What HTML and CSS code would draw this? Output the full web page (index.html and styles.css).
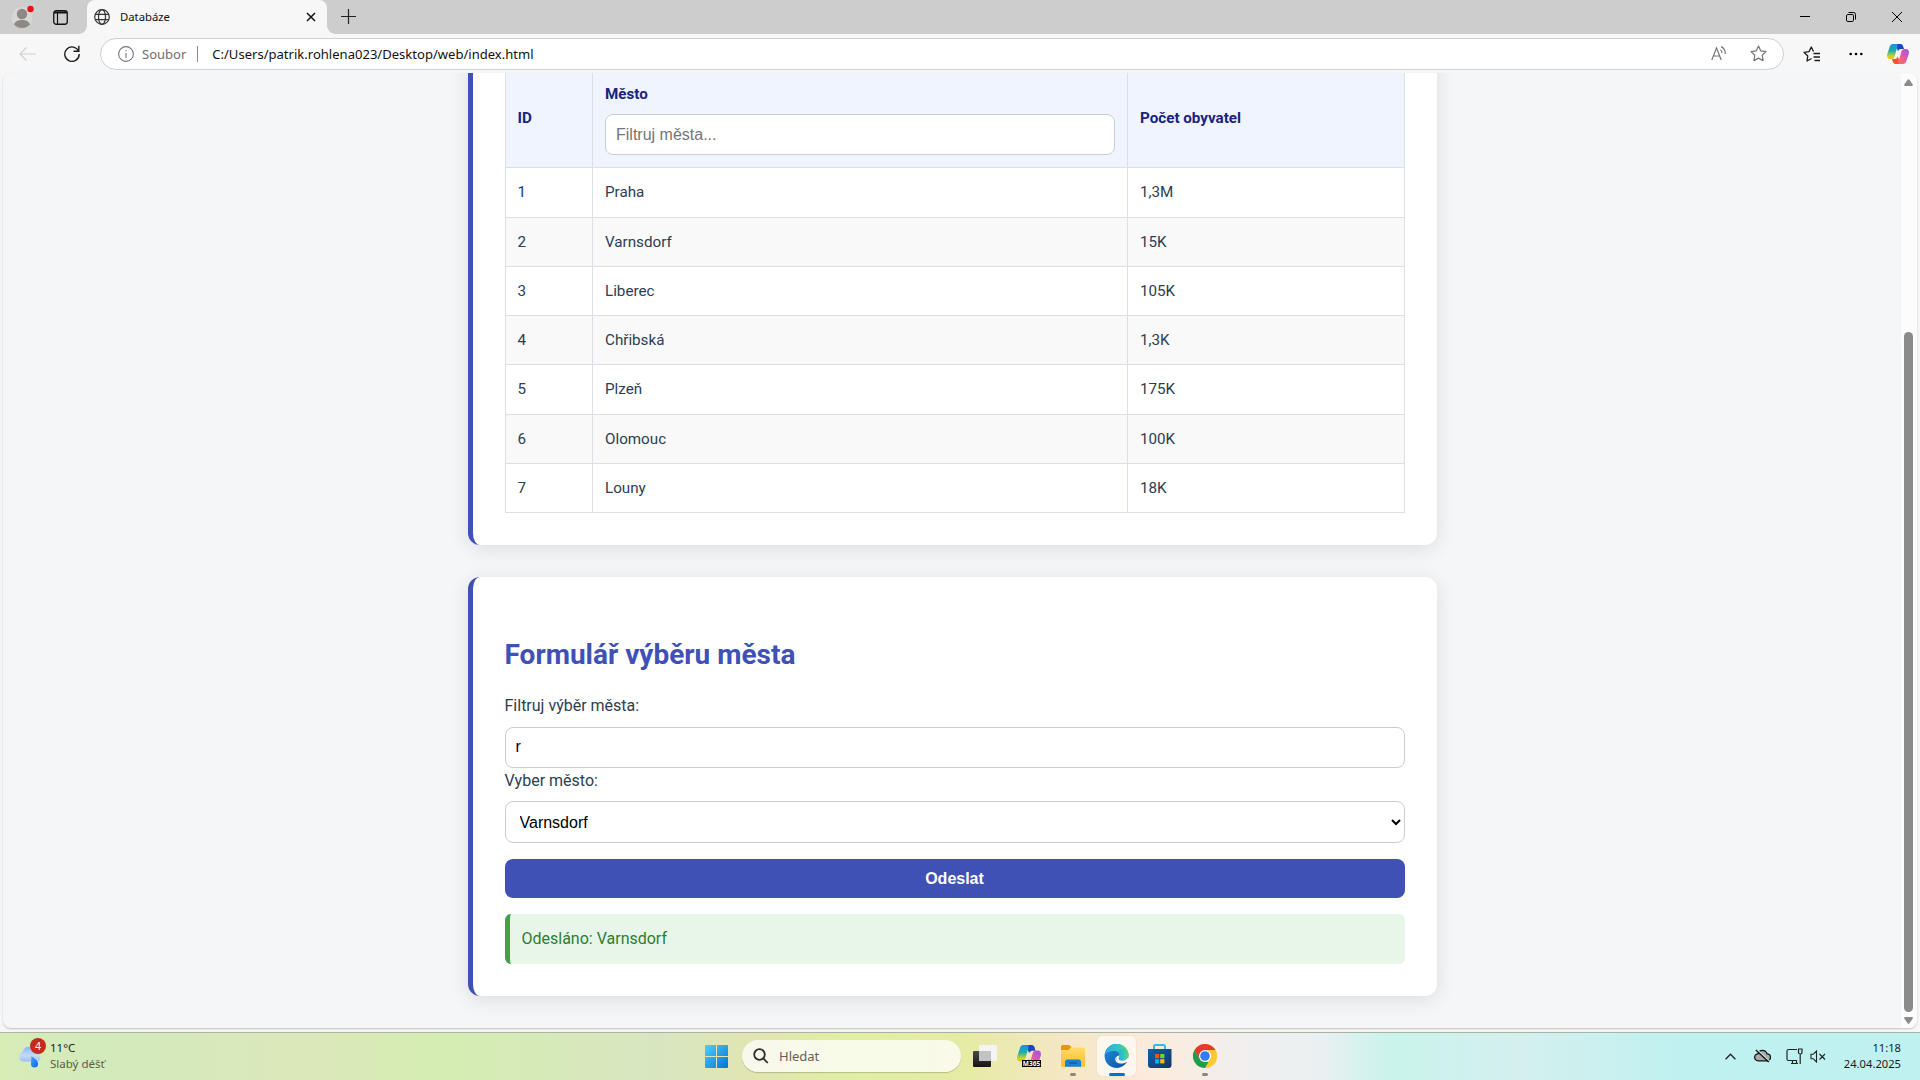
FILE: index.html
```html
<!DOCTYPE html>
<html lang="cs">
<head>
<meta charset="utf-8">
<title>Databáze</title>
<link rel="stylesheet" href="styles.css">
</head>
<body>
<svg class="defs" width="0" height="0" aria-hidden="true">
  <defs>
    <linearGradient id="winblue" x1="0" y1="0" x2="1" y2="1"><stop offset="0" stop-color="#4fd0fb"/><stop offset="1" stop-color="#0670cf"/></linearGradient>
    <linearGradient id="cpA" x1="0" y1="0" x2="0" y2="1"><stop offset="0" stop-color="#1295e8"/><stop offset=".45" stop-color="#1fb0a8"/><stop offset=".8" stop-color="#c6d22e"/><stop offset="1" stop-color="#f5c400"/></linearGradient>
    <linearGradient id="cpB" x1="1" y1="0" x2="0" y2="1"><stop offset="0" stop-color="#9a50f0"/><stop offset=".5" stop-color="#e859a4"/><stop offset="1" stop-color="#ff7a2f"/></linearGradient>
    <linearGradient id="folder" x1="0" y1="0" x2="0" y2="1"><stop offset="0" stop-color="#ffdb6b"/><stop offset="1" stop-color="#f9bd2a"/></linearGradient>
    <linearGradient id="edgeA" x1="0" y1="0" x2="1" y2="0"><stop offset="0" stop-color="#2aa7e4"/><stop offset=".55" stop-color="#2fc7c4"/><stop offset="1" stop-color="#62d957"/></linearGradient>
    <linearGradient id="edgeB" x1="0" y1="0" x2="1" y2="1"><stop offset="0" stop-color="#1f8fe0"/><stop offset="1" stop-color="#0c4f9c"/></linearGradient>
    <linearGradient id="store" x1="0" y1="0" x2="1" y2="1"><stop offset="0" stop-color="#0c62ae"/><stop offset="1" stop-color="#153464"/></linearGradient>
    <linearGradient id="cloud" x1="0" y1="0" x2="0" y2="1"><stop offset="0" stop-color="#8db8f2"/><stop offset=".6" stop-color="#c4dafb"/><stop offset="1" stop-color="#9dbdf3"/></linearGradient>
    <linearGradient id="drop" x1="0" y1="0" x2="1" y2="1"><stop offset="0" stop-color="#43a4ff"/><stop offset="1" stop-color="#0a63ea"/></linearGradient>
    <linearGradient id="dark" x1="0" y1="0" x2="0" y2="1"><stop offset="0" stop-color="#484848"/><stop offset="1" stop-color="#151515"/></linearGradient>
    <symbol id="copilot" viewBox="0 0 22 20">
      <path fill="url(#cpA)" d="M6 0h7.200c-2 .5-2.700 2-3.200 4L7.600 12.500c-.6 1.800-1.300 2.600-3.200 2.600H3c-2.500 0-3.500-2.500-2.700-5L2.600 3C3.200 1 4.200 0 6 0z"/>
      <path fill="#1a45c4" d="M10.500 0h3c1.400 0 2.200.9 2.700 2.500l.8 2.600h-3c-1.500 0-2.300.8-2.900 2.400L10 4.500z"/>
      <path fill="url(#cpB)" d="M16 20H8.800c2-.5 2.700-2 3.200-4l2.400-8.500c.6-1.800 1.300-2.600 3.200-2.600H19c2.500 0 3.500 2.500 2.700 5L19.400 17c-.6 2-1.600 3-3.400 3z"/>
      <path fill="#f3502f" d="M11.500 20h-3c-1.400 0-2.200-.9-2.700-2.500L5 14.900h3c1.500 0 2.300-.8 2.900-2.400l1.100 3z"/>
    </symbol>
  </defs>
</svg>

<div class="tabstrip">
  <svg class="avatar" width="26" height="26" viewBox="0 0 26 26"><circle cx="12" cy="13.500" r="10.500" fill="#d9d7d4"/><circle cx="12" cy="10" r="5.200" fill="#8d8985"/><path fill="#8d8985" d="M4 20.500C5.500 16.800 8.500 16 12 16s6.500.8 8 4.500C18 23 15 24 12 24s-6-1-8-3.500z"/><circle cx="20.500" cy="5" r="3.200" fill="#e81113"/></svg>
  <svg class="workspaces" width="15" height="15" viewBox="0 0 15 15"><rect x=".75" y=".75" width="13.500" height="13.500" rx="2.500" fill="none" stroke="#111" stroke-width="1.300"/><path d="M1 2.500h13" stroke="#111" stroke-width="2"/><path d="M4.500 3v11" stroke="#111" stroke-width="1.200"/></svg>
  <div class="tab">
    <svg width="16" height="16" viewBox="0 0 16 16" fill="none" stroke="#333" stroke-width="1.200"><circle cx="8" cy="8" r="7.300"/><ellipse cx="8" cy="8" rx="3.500" ry="7.300"/><path d="M1.300 5.300h13.400M1.300 10.700h13.400"/></svg>
    <span class="tab-title">Databáze</span>
    <svg width="10" height="10" viewBox="0 0 10 10" stroke="#111" stroke-width="1.500"><path d="M1 1l8 8M9 1l-8 8"/></svg>
  </div>
  <svg class="newtab" width="15" height="15" viewBox="0 0 15 15" stroke="#222" stroke-width="1.200"><path d="M7.500 0v15M0 7.500h15"/></svg>
  <div class="window-buttons">
    <svg width="10" height="10" viewBox="0 0 10 10" stroke="#000"><path d="M0 4.500h10"/></svg>
    <svg width="10" height="10" viewBox="0 0 10 10" fill="none" stroke="#000"><rect x=".5" y="2.500" width="7" height="7" rx="1.300"/><path d="M2.500.5H7.500a2 2 0 0 1 2 2v5"/></svg>
    <svg width="10" height="10" viewBox="0 0 10 10" stroke="#000"><path d="M0 0l10 10M10 0L0 10"/></svg>
  </div>
</div>

<div class="toolbar">
  <svg class="back" width="17" height="14" viewBox="0 0 17 14" fill="none" stroke="#cfcfcf" stroke-width="1.200"><path d="M17 7H1M7.500.5L1 7l6.500 6.500"/></svg>
  <svg class="reload" width="16" height="17" viewBox="0 0 16 17" fill="none" stroke="#1b1b1b" stroke-width="1.400"><path d="M14.700 6.500A7.200 7.200 0 1 0 15.200 9"/><path d="M14.800 .8v5.400H9.500"/></svg>
  <div class="address">
    <svg width="16" height="16" viewBox="0 0 16 16" fill="none" stroke="#777" stroke-width="1.100"><circle cx="8" cy="8" r="7.400"/><path d="M8 7v5M8 4v1.300"/></svg>
    <span class="scheme">Soubor</span>
    <span class="divider"></span>
    <span class="url">C:/Users/patrik.rohlena023/Desktop/web/index.html</span>
    <svg class="read" width="17" height="15" viewBox="0 0 17 15" fill="none" stroke="#777" stroke-width="1.200"><path d="M.8 14L5.500 2l4.700 12M2.400 10h6.200M9.500 3.600c1 .8 1.500 2 1.500 3.400M10 .6c2.800 1.300 4.500 4 4.300 7.400"/></svg>
    <svg class="star" width="17" height="17" viewBox="0 0 17 17" fill="none" stroke="#777" stroke-width="1.200" stroke-linejoin="round"><path d="M8.500 1l2.300 4.900 5.200.7-3.800 3.700.9 5.300-4.600-2.500-4.600 2.500.9-5.300L1 6.600l5.200-.7z"/></svg>
  </div>
  <svg class="favorites" width="17" height="16" viewBox="0 0 17 16" fill="none" stroke="#1b1b1b" stroke-width="1.300" stroke-linejoin="round"><path d="M8.500 12.500L4 15l.8-5L1 6.300l5-.7L8.300 1l2.200 4.500"/><path d="M10.500 7.500H17M10.500 11H17M11.500 14.500H17"/></svg>
  <svg class="more" width="14" height="4" viewBox="0 0 14 4"><circle cx="1.700" cy="2" r="1.300"/><circle cx="7" cy="2" r="1.300"/><circle cx="12.300" cy="2" r="1.300"/></svg>
  <svg class="copilot" width="22" height="20"><use href="#copilot"/></svg>
</div>

<div class="frame">
  <div class="viewport">
    <main class="page">
      <section class="card">
        <table>
          <thead>
            <tr>
              <th class="col-id">ID</th>
              <th class="col-city">Město<input type="text" placeholder="Filtruj města..."></th>
              <th>Počet obyvatel</th>
            </tr>
          </thead>
          <tbody>
            <tr><td>1</td><td>Praha</td><td>1,3M</td></tr>
            <tr><td>2</td><td>Varnsdorf</td><td>15K</td></tr>
            <tr><td>3</td><td>Liberec</td><td>105K</td></tr>
            <tr><td>4</td><td>Chřibská</td><td>1,3K</td></tr>
            <tr><td>5</td><td>Plzeň</td><td>175K</td></tr>
            <tr><td>6</td><td>Olomouc</td><td>100K</td></tr>
            <tr><td>7</td><td>Louny</td><td>18K</td></tr>
          </tbody>
        </table>
      </section>
      <section class="card">
        <h2>Formulář výběru města</h2>
        <label for="filter">Filtruj výběr města:</label>
        <input id="filter" type="text" value="r">
        <label for="city">Vyber město:</label>
        <select id="city"><option>Varnsdorf</option></select>
        <button type="button">Odeslat</button>
        <div class="message">Odesláno: Varnsdorf</div>
      </section>
    </main>
    <div class="scrollbar">
      <svg width="9" height="7" viewBox="0 0 9 7"><path fill="#8b8b8b" d="M3.600.7a1 1 0 0 1 1.800 0L8.800 5.600Q9 7 8 7H1Q0 7 .2 5.600z"/></svg>
      <div class="thumb"></div>
      <svg width="9" height="7" viewBox="0 0 9 7"><path fill="#8b8b8b" d="M3.600 6.300a1 1 0 0 0 1.800 0L8.800 1.400Q9 0 8 0H1Q0 0 .2 1.400z"/></svg>
    </div>
  </div>
</div>

<div class="taskbar">
  <div class="weather">
    <div class="weather-icon">
      <svg width="24" height="24" viewBox="0 0 24 24"><path fill="url(#cloud)" d="M5 17.500a5 5 0 0 1-.5-9.500A7 7 0 0 1 18 8a5 5 0 0 1 1.500 9.500z"/><path fill="url(#drop)" d="M13.500 12c3 2.500 6.500 4.500 6.500 8a3.500 3.500 0 0 1-7 0z"/></svg>
      <span class="badge">4</span>
    </div>
    <div class="weather-text"><span>11°C</span><span class="cond">Slabý déšť</span></div>
  </div>
  <div class="apps">
    <svg class="start" width="23" height="23" viewBox="0 0 23 23"><path fill="url(#winblue)" d="M1 0h10v11H0V1q0-1 1-1zM12 0h10q1 0 1 1v10H12zM0 12h11v11H1q-1 0-1-1zM12 12h11v10q0 1-1 1H12z"/></svg>
    <div class="search">
      <svg width="16" height="16" viewBox="0 0 16 16" fill="none" stroke="#2d2f2a" stroke-width="1.800"><circle cx="6.500" cy="6.500" r="5.300"/><path d="M10.300 10.300l4.500 4.700"/></svg>
      <span>Hledat</span>
    </div>
    <svg class="taskview" width="24" height="22" viewBox="0 0 24 22"><rect x="0" y="6" width="18" height="16" rx="1" fill="url(#dark)"/><rect x="6" y="0" width="18" height="16" rx="1" fill="#f4f4f4"/><path fill="#c3c3c3" d="M6 6h12v10H6z"/></svg>
    <div class="m365"><svg width="24" height="22"><use href="#copilot"/></svg><span>M365</span></div>
    <div class="app running"><svg width="24" height="22" viewBox="0 0 24 22"><path fill="#e09b06" d="M0 1.500Q0 0 1.500 0h6.200q.9 0 1.500.7L11 3v4H0z"/><path fill="url(#folder)" d="M0 5h7.500L10 2.500h12.500Q24 2.500 24 4v16.500q0 1.200-1.300 1.200H1.300Q0 21.700 0 20.500z"/><path fill="#1382d6" d="M4 17q0-2.500 2.500-2.500h11Q20 14.500 20 17v4.700H4z"/><path stroke="#0d5ea8" stroke-width="1.500" d="M8 18h8"/></svg></div>
    <div class="app active"><svg width="25" height="24" viewBox="0 0 24 24"><circle cx="12" cy="12" r="11.900" fill="url(#edgeB)"/><path fill="#fdf6ec" d="M11.500 12.500c-1 3.200 2 5.300 5 5.200 2.200 0 4.300-.9 6-2.200l1.500-1v3L22 18c-2 1.300-4.500 1.700-6.500 1.500-4-.4-6-4-4-7z"/><path fill="url(#edgeA)" d="M.2 11C1.200 4.500 6.300 0 12.300 0 18.500 0 24 4.600 24 10.200c0 3.900-2.800 6.200-6 6.200-2.200 0-3.800-.8-3.800-2 0-.8 1-1.200 1-2.800 0-2.600-2.400-4.600-5.700-4.600C5 7 1.500 9 .2 11z"/><path fill="#fdf6ec" d="M15.200 11.600c0 1.600-1 2-1 2.800 0 1.200 1.600 2 3.800 2 2.300 0 4.300-1.100 5.300-3L24 17l-6.500 1.700c-3.500.3-6.300-2-5.800-5 .3-1.400 1.800-2.500 3.500-2.100z"/><path fill="url(#edgeA)" d="M15.200 11.600c.1-1.800-.7-3.100-2-4L19 4l4.900 5.200c.5 4-2.300 7.200-5.900 7.200-2.200 0-3.800-.8-3.800-2 0-.8 1-1.200 1-2.800z"/></svg></div>
    <svg class="store" width="24" height="24" viewBox="0 0 24 24"><path fill="none" stroke="#2bbdf0" stroke-width="2" d="M6 6V2.500Q6 1 7.500 1h8Q17 1 17 2.500V6"/><path fill="url(#store)" d="M0 5h23.500v16q0 3-3 3H3q-3 0-3-3z"/><path fill="#f1511b" d="M7 10h4.200v4.200H7z"/><path fill="#80cc28" d="M12.200 10h4.200v4.200h-4.200z"/><path fill="#00adef" d="M7 15.200h4.200v4.200H7z"/><path fill="#fbbc09" d="M12.200 15.200h4.200v4.200h-4.200z"/></svg>
    <div class="app running"><svg width="24" height="24" viewBox="0 0 24 24"><circle cx="12" cy="12" r="12" fill="#fcc934"/><path fill="#1e9e4a" d="M1.600 6l5.200 9L12 18h5.200L12 24A12 12 0 0 1 1.600 6z"/><path fill="#fcc934" d="M12 24l5.200-9L18 8h5.300A12 12 0 0 1 12 24z"/><path fill="#e33b2e" d="M12 6h10.400A12 12 0 0 0 1.600 6l5.200 9z"/><circle cx="12" cy="12" r="6" fill="#fff"/><circle cx="12" cy="12" r="4.800" fill="#2f7df0"/></svg></div>
  </div>
  <div class="tray">
    <svg class="chevron" width="11" height="7" viewBox="0 0 11 7" fill="none" stroke="#222" stroke-width="1.300"><path d="M.6 6.200L5.500 1.200l4.900 5"/></svg>
    <svg class="cloudoff" width="17" height="14" viewBox="0 0 17 14" fill="none" stroke="#111" stroke-width="1.300"><path fill="#aaa" d="M4.300 11.800a3.500 3.500 0 0 1-.3-7 4.700 4.700 0 0 1 9 0 3.500 3.500 0 0 1 0 7z"/><path stroke="#c1f1ef" d="M3 .8l13 12"/><path d="M1.800 1l13 12"/></svg>
    <svg class="net" width="17" height="17" viewBox="0 0 17 17" fill="none" stroke="#222" stroke-width="1.200"><path d="M11 1.500H2.500Q1 1.500 1 3v8q0 1.500 1.500 1.500H11M5 15.500h7M6.500 12.500v3M10.500 12.500v3M12.500 1h3.500v3.500q0 1.500-1.700 1.500t-1.800-1.500zM14.200 6v10"/></svg>
    <svg class="sound" width="16" height="13" viewBox="0 0 16 13" fill="none" stroke="#222" stroke-width="1.100"><path d="M1 4.300h2.200L6.500 1v11L3.200 8.700H1zM9.500 4l5.500 5.500M15 4L9.500 9.500"/></svg>
    <div class="clock"><span>11:18</span><span>24.04.2025</span></div>
  </div>
</div>
</body>
</html>
```
FILE: styles.css
```css
* { box-sizing: border-box; }
body {
  margin: 0;
  width: 1920px;
  height: 1080px;
  overflow: hidden;
  display: flex;
  flex-direction: column;
  background: #f7f7f7;
  font-family: "Noto Sans", "Open Sans", sans-serif;
  font-size: 12px;
}
svg { display: block; flex: none; }
.defs { position: absolute; }

/* Browser chrome */
.tabstrip {
  flex: none;
  height: 34px;
  display: flex;
  align-items: center;
  background: #cdcdcd;
}
.avatar { margin: 0 17px 0 10px; }
.workspaces { margin-right: 18px; }
.tab {
  position: relative;
  width: 240px;
  height: 34px;
  margin-left: 1px;
  padding: 0 11px 1px 7px;
  display: flex;
  align-items: center;
  background: #f7f7f7;
  border-radius: 8px 8px 0 0;
}
.tab::before, .tab::after {
  content: "";
  position: absolute;
  bottom: 0;
  width: 8px;
  height: 8px;
}
.tab::before { left: -8px; background: radial-gradient(circle at 0 0, #cdcdcd 7.500px, #f7f7f7 8px); }
.tab::after { right: -8px; background: radial-gradient(circle at 100% 0, #cdcdcd 7.500px, #f7f7f7 8px); }
.tab-title { flex: 1; margin-left: 10px; font-size: 11.300px; color: #111; }
.newtab { margin: 0 0 1px 14px; }
.window-buttons { margin-left: auto; display: flex; gap: 36px; padding-right: 18px; }

.toolbar {
  flex: none;
  height: 39px;
  display: flex;
  align-items: center;
}
.back { margin-left: 19px; }
.reload { margin-left: 28px; }
.address {
  width: 1684px;
  height: 32px;
  margin-left: 20px;
  padding: 0 16px 0 17px;
  display: flex;
  align-items: center;
  background: #fff;
  border: 1px solid #cfcfcf;
  border-radius: 16px;
}
.scheme { margin-left: 8px; font-size: 13px; color: #6e6e6e; }
.divider { width: 1px; height: 16px; margin: 0 14px 0 11px; background: #8a8a8a; }
.url { flex: 1; font-size: 13.060px; color: #111; }
.star { margin-left: 22px; }
.favorites { margin-left: 19px; }
.more { margin-left: 29px; }
.copilot { margin-left: 24px; }

.frame { flex: none; height: 959px; padding: 0 3px 4px; }
.viewport {
  height: 955px;
  display: flex;
  overflow: hidden;
  background: #f4f6f8;
  border-radius: 8px;
  box-shadow: 0 1px 2px rgba(0, 0, 0, .22);
}
.scrollbar {
  flex: none;
  width: 16px;
  padding: 6px 1px 4px 0;
  display: flex;
  flex-direction: column;
  align-items: center;
  justify-content: space-between;
  background: #fcfcfc;
}
.thumb { width: 9px; height: 680px; margin-top: 240px; border-radius: 5px; background: #8b8b8b; }

/* Page */
.page {
  flex: 1;
  height: 955px;
  padding-bottom: 32px;
  display: flex;
  flex-direction: column;
  justify-content: flex-end;
  align-items: center;
  gap: 32px;
  overflow: hidden;
  font-family: Roboto, sans-serif;
  font-size: 16px;
  line-height: 1.6;
  color: #2c3e50;
}
.card {
  flex: none;
  width: 969px;
  padding: 32px;
  background: #fff;
  border-left: 5px solid #3f51b5;
  border-radius: 12px;
  box-shadow: 0 4px 20px rgba(0, 0, 0, .1);
}
table { width: 100%; table-layout: fixed; border-collapse: collapse; font-size: 15.200px; }
th, td { padding: 12px; border: 1px solid #dcdfe6; text-align: left; }
th { background: #f0f4ff; color: #1a237e; font-weight: 700; }
.col-id { width: 87.500px; }
.col-city { width: 535px; }
tbody tr:nth-child(even) { background: #f9f9f9; }
h2 { margin: 23.240px 0 16px; font-size: 28px; color: #3f51b5; }
label { display: block; margin-bottom: 8px; }
input, select {
  display: block;
  width: 100%;
  height: 40.800px;
  padding: 10px;
  font-family: "Liberation Sans", Arial, sans-serif;
  font-size: 16px;
  color: #000;
  background: #fff;
  border: 1px solid #ccc;
  border-radius: 8px;
}
select { height: 42px; }
input::placeholder { color: #757575; }
th input { margin-top: 8px; }
button {
  display: block;
  width: 100%;
  height: 39px;
  margin-top: 16px;
  padding: 10px;
  font: 700 16px "Liberation Sans", Arial, sans-serif;
  color: #fff;
  background: #3f51b5;
  border: 0;
  border-radius: 8px;
}
.message {
  margin-top: 16px;
  padding: 12px;
  color: #2e7d32;
  background: #e8f5e9;
  border-left: 5px solid #43a047;
  border-radius: 6px;
}

/* Taskbar */
.taskbar {
  flex: none;
  height: 48px;
  padding-bottom: 1px;
  display: grid;
  grid-template-columns: 705px 1fr auto;
  border-top: 1px solid #aab3a4;
  background: linear-gradient(90deg, #d8ecb6 0, #d3eabb 100px, #dbe8ba 300px, #d5edb2 440px, #d8e6c0 660px, #e1e5b2 750px, #e1efa4 850px, #e6eba6 970px, #f4e7c3 1060px, #fcebdc 1150px, #f0eff0 1250px, #eaf0f1 1320px, #c9f3ec 1390px, #d4f0ee 1520px, #bff1f0 1680px, #bff1f0 1920px);
}
.weather { display: flex; align-items: center; padding-left: 18px; }
.weather-icon { position: relative; }
.badge {
  position: absolute;
  left: 12px;
  top: -6px;
  width: 16px;
  height: 16px;
  border-radius: 50%;
  background: #c42b1c;
  color: #fff;
  font-size: 10.500px;
  line-height: 16px;
  text-align: center;
}
.weather-text { display: flex; flex-direction: column; margin-left: 8px; font-size: 11.500px; line-height: 16px; color: #1b1b1b; }
.cond { color: #565e4c; }
.apps { display: flex; align-items: center; }
.search {
  width: 219px;
  height: 32px;
  margin: 0 12px 0 14px;
  padding-left: 11px;
  display: flex;
  align-items: center;
  gap: 10px;
  border-radius: 16px;
  background: rgba(255, 255, 255, .75);
  box-shadow: 0 1px 1px rgba(0, 0, 0, .2);
  font-size: 13px;
  color: #5f6358;
}
.m365 { position: relative; margin-left: 20px; }
.m365 span { position: absolute; right: 0; bottom: 0; width: 19px; overflow: hidden; background: #000; color: #fff; font: 700 6.500px/7px "Noto Sans", sans-serif; text-align: center; }
.app { position: relative; width: 39px; height: 40px; display: grid; place-items: center; border-radius: 5px; }
.m365 + .app { margin-left: 12px; }
.app.active { margin-left: 5px; background: rgba(255, 255, 255, .6); box-shadow: 0 0 1px rgba(0, 0, 0, .25); }
.app::after { content: ""; position: absolute; bottom: 0; left: 17px; width: 6px; height: 3px; border-radius: 2px; background: #8d857a; }
.app.active::after { left: 12px; width: 16px; background: #0071d4; }
.store { margin: 0 13px 0 12px; }
.tray { display: flex; align-items: center; padding-right: 19px; }
.cloudoff { margin-left: 18px; }
.net { margin-left: 15px; }
.sound { margin-left: 7px; }
.clock { width: 75px; display: flex; flex-direction: column; text-align: right; font-size: 11.200px; line-height: 16px; color: #1b1b1b; }
```
